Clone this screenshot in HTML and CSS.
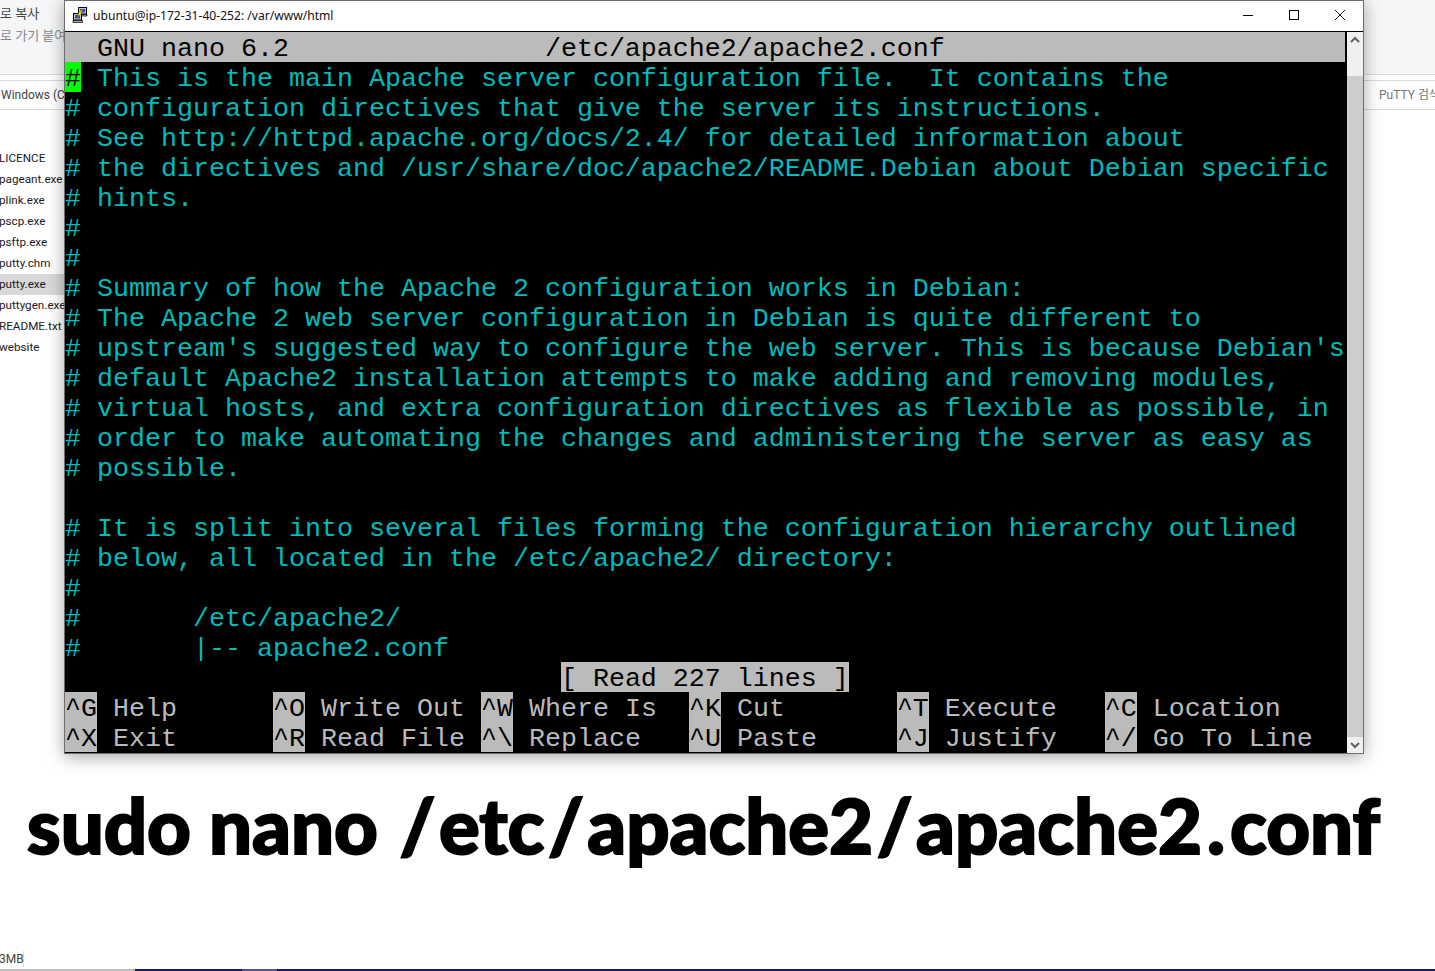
FILE: index.html
```html
<!DOCTYPE html>
<html lang="ko">
<head>
<meta charset="utf-8">
<title>sudo nano /etc/apache2/apache2.conf</title>
<link rel="stylesheet" href="styles.css">
</head>
<body>
<div class="explorer">
  <div class="ribbon">
    <span class="ribbon-item">로 복사</span>
    <span class="ribbon-item muted">로 가기 붙여넣기</span>
  </div>
  <div class="address">
    <span class="crumb">Windows (C:)</span>
    <span class="search">PuTTY 검색</span>
  </div>
  <ul class="files">
    <li>LICENCE</li>
    <li>pageant.exe</li>
    <li>plink.exe</li>
    <li>pscp.exe</li>
    <li>psftp.exe</li>
    <li>putty.chm</li>
    <li class="selected">putty.exe</li>
    <li>puttygen.exe</li>
    <li>README.txt</li>
    <li>website</li>
  </ul>
  <div class="statusbar"><span class="size">3MB</span></div>
  <div class="taskbar"><span class="task-idle"></span><span class="task-run"></span><span class="task-light"></span><span class="task-run grow"></span></div>
</div>

<div class="overlay">
  <section class="window">
    <header class="titlebar">
      <svg class="app-icon" viewBox="0 0 16 16" width="16" height="16" aria-hidden="true">
        <rect x="6.5" y="0.5" width="8" height="6.5" fill="#c8c8d0" stroke="#000"/>
        <rect x="8" y="2" width="5" height="3.5" fill="#3a4fa8"/>
        <path d="M7 7.5h8v1.5H7z" fill="#aaa" stroke="#000" stroke-width=".7"/>
        <rect x="1.5" y="6.5" width="8" height="6.5" fill="#c8c8d0" stroke="#000"/>
        <rect x="3" y="8" width="5" height="3.5" fill="#3a4fa8"/>
        <path d="M1 13.5h9.5v2H1z" fill="#aaa" stroke="#000" stroke-width=".7"/>
        <path d="M11 2.5 8.5 6 10 6 5 11 7 7.5 5.5 7.5 8.5 3.5z" fill="#ffe600" stroke="#6b5a00" stroke-width=".4"/>
      </svg>
      <span class="title">ubuntu@ip-172-31-40-252: /var/www/html</span>
      <div class="controls">
        <button class="ctl" aria-label="최소화"><svg viewBox="0 0 10 10" width="10" height="10"><path d="M0 5.5h10" stroke="#000" fill="none"/></svg></button>
        <button class="ctl" aria-label="최대화"><svg viewBox="0 0 10 10" width="10" height="10"><rect x=".5" y=".5" width="9" height="9" stroke="#000" fill="none"/></svg></button>
        <button class="ctl" aria-label="닫기"><svg viewBox="0 0 10 10" width="10" height="10"><path d="M0 0l10 10M10 0L0 10" stroke="#000" fill="none" stroke-width=".9"/></svg></button>
      </div>
    </header>
    <div class="client">
      <div class="terminal">
        <div class="row rev-row">  GNU nano 6.2                /etc/apache2/apache2.conf</div>
        <div class="row"><span class="cursor">#</span> This is the main Apache server configuration file.  It contains the</div>
        <div class="row"># configuration directives that give the server its instructions.</div>
        <div class="row"># See http://httpd.apache.org/docs/2.4/ for detailed information about</div>
        <div class="row"># the directives and /usr/share/doc/apache2/README.Debian about Debian specific</div>
        <div class="row"># hints.</div>
        <div class="row">#</div>
        <div class="row">#</div>
        <div class="row"># Summary of how the Apache 2 configuration works in Debian:</div>
        <div class="row"># The Apache 2 web server configuration in Debian is quite different to</div>
        <div class="row"># upstream's suggested way to configure the web server. This is because Debian's</div>
        <div class="row"># default Apache2 installation attempts to make adding and removing modules,</div>
        <div class="row"># virtual hosts, and extra configuration directives as flexible as possible, in</div>
        <div class="row"># order to make automating the changes and administering the server as easy as</div>
        <div class="row"># possible.</div>
        <div class="row"> </div>
        <div class="row"># It is split into several files forming the configuration hierarchy outlined</div>
        <div class="row"># below, all located in the /etc/apache2/ directory:</div>
        <div class="row">#</div>
        <div class="row">#       /etc/apache2/</div>
        <div class="row">#       |-- apache2.conf</div>
        <div class="row plain">                               <span class="rev">[ Read 227 lines ]</span></div>
        <div class="row plain"><span class="rev">^G</span> Help      <span class="rev">^O</span> Write Out <span class="rev">^W</span> Where Is  <span class="rev">^K</span> Cut       <span class="rev">^T</span> Execute   <span class="rev">^C</span> Location</div>
        <div class="row plain"><span class="rev">^X</span> Exit      <span class="rev">^R</span> Read File <span class="rev">^\</span> Replace   <span class="rev">^U</span> Paste     <span class="rev">^J</span> Justify   <span class="rev">^/</span> Go To Line</div>
      </div>
      <div class="scrollbar">
        <svg class="arrow" viewBox="0 0 16 16" width="16" height="16"><path d="M4 10l4-4 4 4" stroke="#606060" stroke-width="2" fill="none"/></svg>
        <div class="thumb"></div>
        <svg class="arrow" viewBox="0 0 16 16" width="16" height="16"><path d="M4 6l4 4 4-4" stroke="#606060" stroke-width="2" fill="none"/></svg>
      </div>
    </div>
  </section>
  <h1 class="caption">sudo nano <span class="sep">/</span>etc<span class="sep">/</span>apache2<span class="sep">/</span>apache2<span class="dot">.</span>conf</h1>
</div>
</body>
</html>
```
FILE: styles.css
```css
* { box-sizing: border-box; }
html, body { margin: 0; padding: 0; }
body {
  position: relative;
  width: 1435px;
  height: 971px;
  overflow: hidden;
  background: #fff;
  font-family: Roboto, "Noto Sans CJK KR", sans-serif;
}

/* File explorer behind the terminal */
.explorer { display: flex; flex-direction: column; height: 971px; }
.ribbon {
  height: 75px;
  padding: 6px 0 0 0;
  background: #f5f6f7;
  border-bottom: 1px solid #d9d9d9;
  display: flex;
  flex-direction: column;
  gap: 6px;
}
.ribbon-item { font-size: 13px; line-height: 16px; color: #444; white-space: nowrap; width: 64px; overflow: hidden; }
.ribbon-item.muted { color: #888; }
.address {
  margin-top: 5px;
  height: 30px;
  padding: 0 0 0 1px;
  border-top: 1px solid #d9d9d9;
  border-bottom: 1px solid #d9d9d9;
  display: flex;
  justify-content: space-between;
  align-items: center;
  font-size: 12px;
  line-height: 16px;
  color: #444;
}
.crumb { white-space: nowrap; }
.search { width: 56px; color: #777; white-space: nowrap; overflow: hidden; }
.files {
  list-style: none;
  margin: 0;
  padding: 38px 0 0 0;
  flex: 1;
  font-size: 11.7px;
  color: #1a1a1a;
}
.files li { width: 64px; height: 21px; line-height: 21px; white-space: nowrap; overflow: hidden; text-indent: -1px; }
.files li.selected { background: #d9d9d9; }
.statusbar { height: 20px; font-size: 12px; color: #444; line-height: 20px; }
.size { display: inline-block; width: 25px; margin-left: -1px; border-right: 1px solid #e0e0e0; line-height: 16px; }
.taskbar { height: 2px; display: flex; }
.task-idle { width: 135px; background: #bdbdbd; }
.task-run { width: 107px; background: #1c1668; }
.task-light { width: 35px; background: #55528f; }
.grow { flex: 1; }

/* Layer above the explorer */
.overlay { position: absolute; inset: 0; padding-left: 64px; }

.window {
  width: 1300px;
  height: 754px;
  border: 1px solid #6e6e6e;
  background: #fff;
  box-shadow: 0 3px 16px rgba(0, 0, 0, .35);
  display: flex;
  flex-direction: column;
}
.titlebar {
  height: 31px;
  flex: none;
  display: flex;
  align-items: center;
  padding-left: 7px;
  border-bottom: 1px solid #000;
}
.app-icon { flex: none; margin-top: -2px; }
.title { margin-left: 5px; font-family: "Noto Sans", sans-serif; font-size: 12.1px; color: #111; margin-top: -2px; }
.controls { margin-left: auto; display: flex; margin-top: -2px; }
.ctl {
  width: 46px;
  height: 24px;
  padding: 0;
  border: 0;
  background: none;
  display: flex;
  align-items: center;
  justify-content: center;
}

.client { flex: 1; display: flex; min-height: 0; }
.terminal {
  width: 1282px;
  flex: none;
  background: #000;
  color: #00bbbb;
  font-family: "Liberation Mono", "Courier New", monospace;
  font-size: 26.67px;
}
.row { width: 1280px; height: 30px; line-height: 34px; white-space: pre; }
.rev-row { background: #bbb; color: #000; }
.plain { color: #bbb; }
.rev { background: #bbb; color: #000; display: inline-block; height: 30px; vertical-align: top; }
.cursor { background: #00ff00; color: #000; display: inline-block; height: 30px; vertical-align: top; }

.scrollbar { flex: 1; background: #f0f0f0; display: flex; flex-direction: column; }
.arrow { flex: none; display: block; }
.thumb { flex: 1; background: #cdcdcd; margin: 28px 0 0 0; }

.caption {
  margin: 21px 0 0 -37px;
  width: 1408px;
  font-family: Lato, sans-serif;
  font-weight: 900;
  font-size: 76px;
  line-height: 100px;
  color: #000;
  -webkit-text-stroke: 2px #000;
  white-space: nowrap;
}
.sep { margin: 0 3.5px; }
.dot { margin: 0 5px; }
```
